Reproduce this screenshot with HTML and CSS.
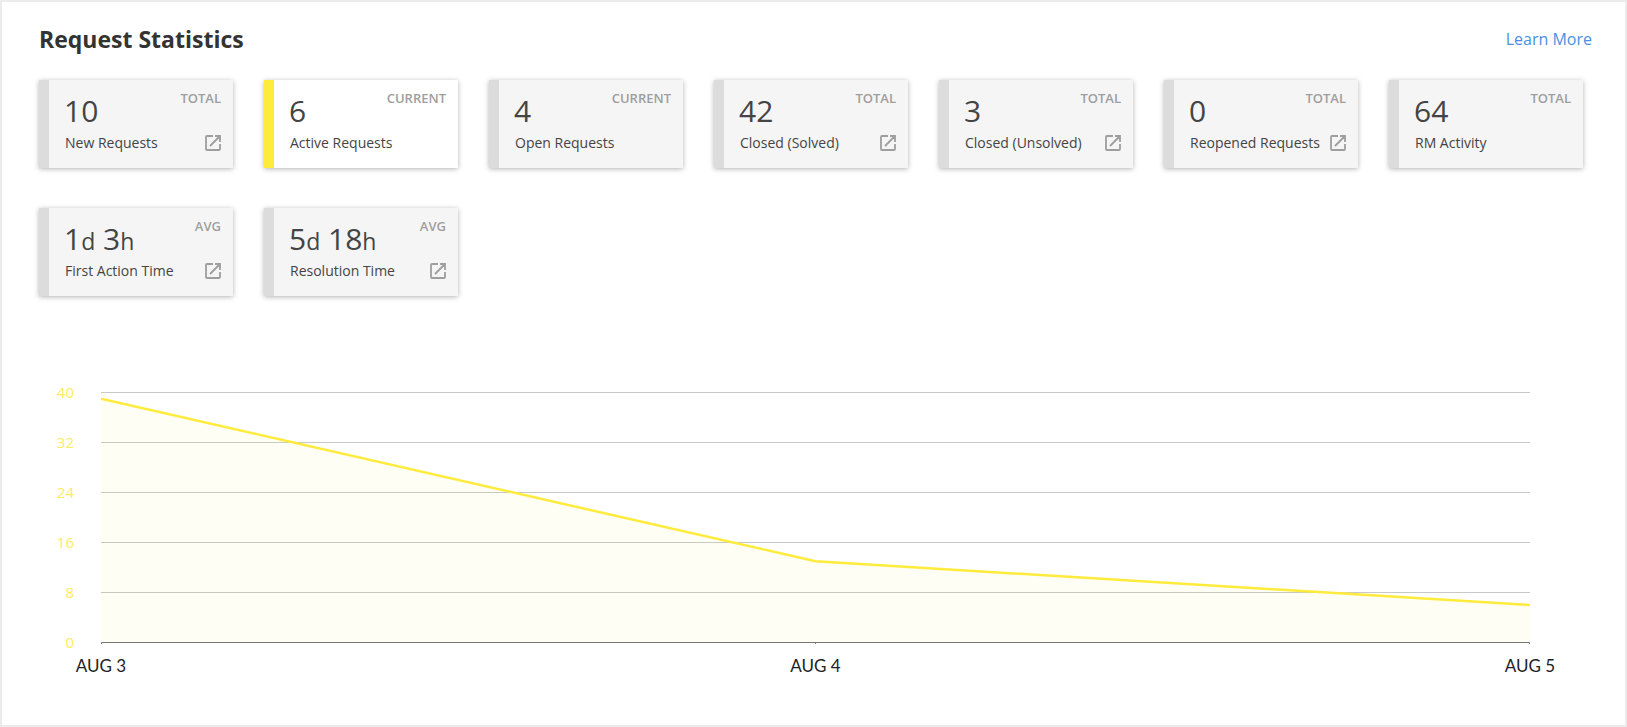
FILE: index.html
```
<!DOCTYPE html>
<html lang="en">
<head>
    <meta charset="UTF-8">
    <meta name="viewport" content="width=device-width, initial-scale=1.0">
    <title>Request Statistics</title>
    <link rel="stylesheet" href="styles.css">
</head>
<body>
    <svg class="sprite" aria-hidden="true">
        <symbol id="icon-open" viewBox="0 0 16 16">
            <path d="M8 1H2Q1 1 1 2V14Q1 15 2 15H14Q15 15 15 14V9M10 1H15V7M15 1L5 11" fill="none" stroke="currentColor" stroke-width="1.8"/>
        </symbol>
    </svg>

    <main class="panel">
        <header class="header">
            <h1>Request Statistics</h1>
            <a class="learn-more" href="#">Learn More</a>
        </header>

        <section class="cards">
            <div class="card">
                <div class="value">10</div>
                <div class="type">TOTAL</div>
                <div class="label">New Requests</div>
                <a class="open" href="#" aria-label="Open New Requests"><svg><use href="#icon-open"/></svg></a>
            </div>
            <div class="card active">
                <div class="value">6</div>
                <div class="type">CURRENT</div>
                <div class="label">Active Requests</div>
            </div>
            <div class="card">
                <div class="value">4</div>
                <div class="type">CURRENT</div>
                <div class="label">Open Requests</div>
            </div>
            <div class="card">
                <div class="value">42</div>
                <div class="type">TOTAL</div>
                <div class="label">Closed (Solved)</div>
                <a class="open" href="#" aria-label="Open Closed (Solved)"><svg><use href="#icon-open"/></svg></a>
            </div>
            <div class="card">
                <div class="value">3</div>
                <div class="type">TOTAL</div>
                <div class="label">Closed (Unsolved)</div>
                <a class="open" href="#" aria-label="Open Closed (Unsolved)"><svg><use href="#icon-open"/></svg></a>
            </div>
            <div class="card">
                <div class="value">0</div>
                <div class="type">TOTAL</div>
                <div class="label">Reopened Requests</div>
                <a class="open" href="#" aria-label="Open Reopened Requests"><svg><use href="#icon-open"/></svg></a>
            </div>
            <div class="card">
                <div class="value">64</div>
                <div class="type">TOTAL</div>
                <div class="label">RM Activity</div>
            </div>
            <div class="card">
                <div class="value">1<small>d</small> 3<small>h</small></div>
                <div class="type">AVG</div>
                <div class="label">First Action Time</div>
                <a class="open" href="#" aria-label="Open First Action Time"><svg><use href="#icon-open"/></svg></a>
            </div>
            <div class="card">
                <div class="value">5<small>d</small> 18<small>h</small></div>
                <div class="type">AVG</div>
                <div class="label">Resolution Time</div>
                <a class="open" href="#" aria-label="Open Resolution Time"><svg><use href="#icon-open"/></svg></a>
            </div>
        </section>

        <section class="chart">
            <div class="y-axis">
                <span>40</span>
                <span>32</span>
                <span>24</span>
                <span>16</span>
                <span>8</span>
                <span>0</span>
            </div>
            <svg class="plot" viewBox="0 0 1429 253" preserveAspectRatio="none">
                <path class="grid" d="M0 .5H1429M0 50.5H1429M0 100.5H1429M0 150.5H1429M0 200.5H1429"/>
                <path class="area" d="M0 6.75L714.5 169.25L1429 213V250.5H0Z"/>
                <path class="axis" d="M.5 252V250.5H1428.5V252M714.5 250.5V252"/>
                <path class="line" d="M0 6.75L714.5 169.25L1429 213"/>
            </svg>
            <div class="x-axis">
                <span>AUG 3</span>
                <span>AUG 4</span>
                <span>AUG 5</span>
            </div>
        </section>
    </main>
</body>
</html>
```
FILE: styles.css
```
* {
    box-sizing: border-box;
}

body {
    margin: 0;
    font-family: "Open Sans", "Noto Sans", sans-serif;
    color: #444;
    background: #fff;
}

.sprite {
    display: none;
}

.panel {
    min-height: 100vh;
    padding: 21px 33px 40px 37px;
    border: 2px solid #ebebeb;
}

.header {
    display: flex;
    justify-content: space-between;
    align-items: center;
    height: 32px;
}

h1 {
    margin: 0;
    font-size: 23px;
    line-height: 32px;
    font-weight: 700;
    color: #333;
}

.learn-more {
    font-size: 16px;
    color: #4a90e2;
    text-decoration: none;
}

.cards {
    display: grid;
    grid-template-columns: repeat(auto-fill, minmax(180px, 1fr));
    gap: 40px 31px;
    margin: 25px 9px 0 0;
}

.card {
    display: grid;
    grid-template-columns: 1fr auto;
    grid-template-rows: 41px 24px;
    height: 88px;
    padding: 10px 12px 0 15px;
    border-left: 10px solid #dcdcdc;
    background: #f5f5f5;
    box-shadow: 0 1px 5px rgba(0, 0, 0, 0.3);
    white-space: nowrap;
}

.card.active {
    border-left-color: #ffeb3b;
    background: #fff;
}

.value {
    grid-area: 1 / 1;
    font-size: 30px;
    line-height: 42px;
}

.value small {
    font-size: 23px;
}

.type {
    grid-area: 1 / 1 / 2 / 3;
    justify-self: end;
    font-size: 13px;
    line-height: 16px;
    font-weight: 600;
    color: #9e9e9e;
}

.label {
    padding-left: 1px;
    font-size: 14px;
    line-height: 24px;
}

.open {
    align-self: center;
    height: 16px;
    color: #9e9e9e;
}

.open svg {
    display: block;
    width: 16px;
    height: 16px;
}

.chart {
    display: grid;
    grid-template-columns: 35px 1fr;
    column-gap: 27px;
    margin: 96px 62px 0 0;
}

.y-axis {
    display: flex;
    flex-direction: column;
    justify-content: space-between;
    height: 270px;
    margin: -10px 0;
    font-size: 15px;
    line-height: 20px;
    text-align: right;
    color: #ffeb5b;
}

.plot {
    display: block;
    width: 100%;
    height: 253px;
}

.plot path {
    fill: none;
    vector-effect: non-scaling-stroke;
}

.plot .grid {
    stroke: #c8c8c8;
}

.plot .area {
    fill: #ffeb3b;
    fill-opacity: 0.05;
}

.plot .axis {
    stroke: #777;
}

.plot .line {
    stroke: #ffeb3b;
    stroke-width: 2.5px;
}

.x-axis {
    grid-column: 2;
    display: flex;
    justify-content: space-between;
    margin: 9px -30px 0;
    font-family: "Gill Sans", "Gill Sans MT", Lato, sans-serif;
    font-size: 17px;
    line-height: 24px;
    color: #222;
}

.x-axis span {
    width: 60px;
    text-align: center;
}
```
